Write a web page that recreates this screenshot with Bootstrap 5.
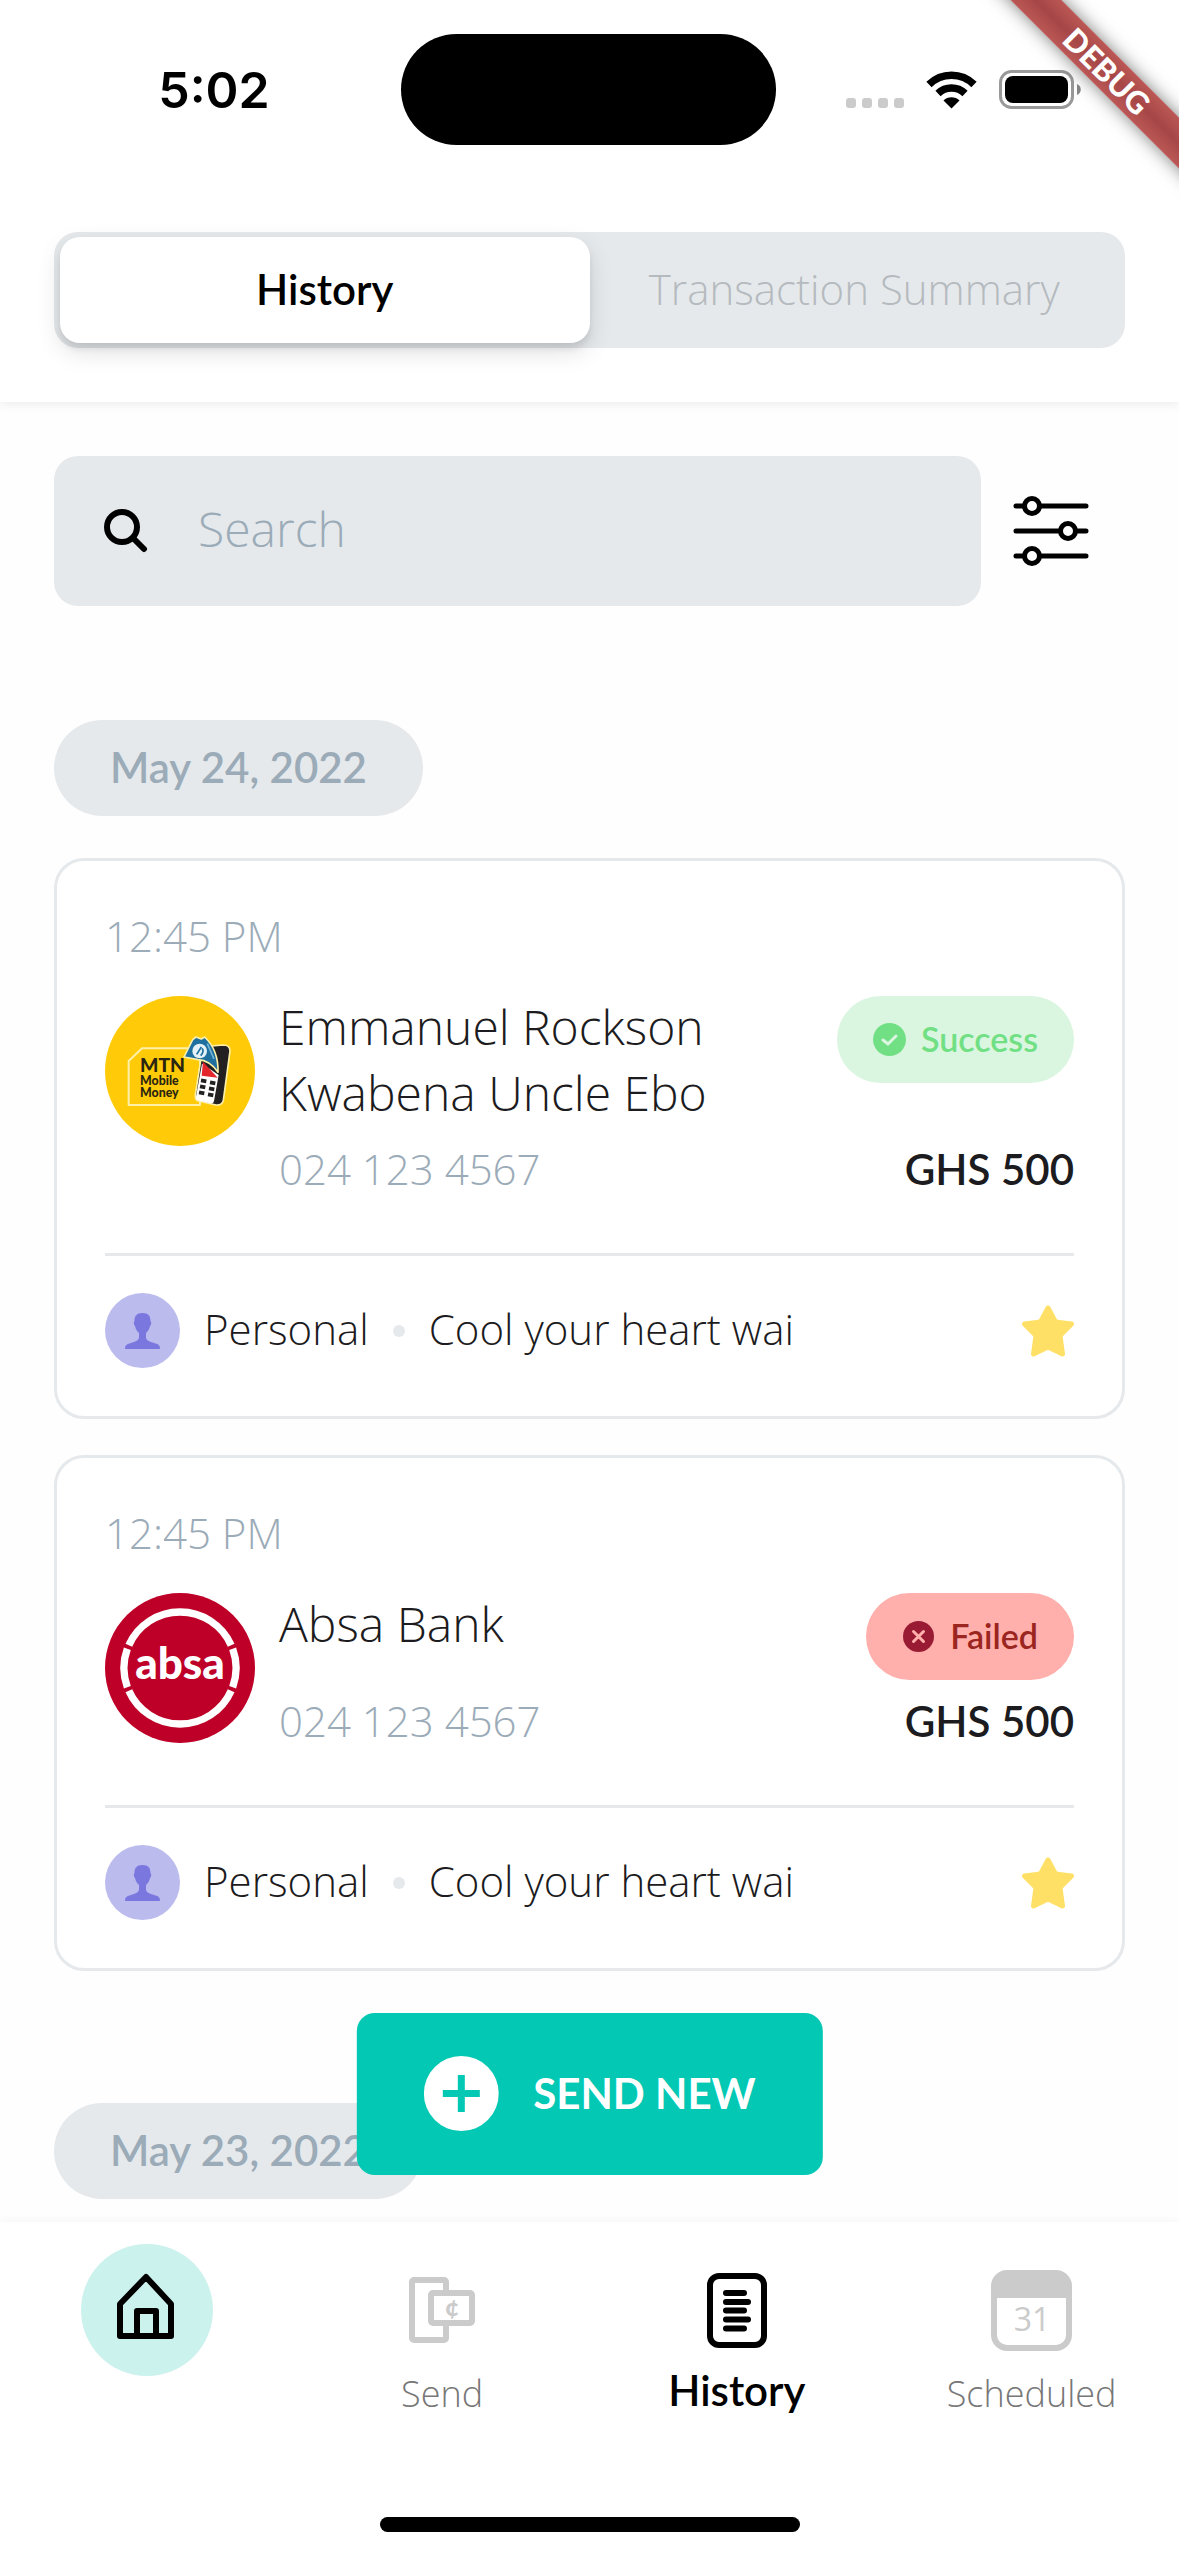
<!DOCTYPE html>
<html lang="en">
<head>
<meta charset="utf-8">
<meta name="viewport" content="width=device-width, initial-scale=1">
<title>History</title>
<link rel="stylesheet" href="https://cdn.jsdelivr.net/npm/bootstrap@5.3.0/dist/css/bootstrap.min.css">
<style>
:root { --haze: #e5e9ec; --muted: #9babb8; --ink: #1c1b20; --teal: #02c8b4; --side: 54px; --thin: 340; }
body { font-family: "Open Sans", "Noto Sans", sans-serif; font-weight: var(--thin); font-size: 42px; line-height: 60px; color: var(--ink); background: #fefefe; }
svg { display: block; flex: none; }
.strong-text { font-family: Lato, sans-serif; font-weight: 600; }
.muted-text { color: var(--muted); }

/* header */
.top-area { background: #fff; box-shadow: 0 2px 10px rgba(0,0,0,.08); padding-bottom: 54px; }
.status-row { padding-top: 34px; margin-bottom: 87px; }
.status-side { flex: 1 1 0; gap: 22px; }
.status-start { padding-left: 27px; }
.status-end { padding-right: 29px; }
.clock { font-family: Inter, sans-serif; font-weight: 600; font-size: 50px; color: #000; }
.island { width: 375px; height: 111px; background: #000; }
.ribbon-clip { position: absolute; top: 0; right: 0; width: 240px; height: 240px; overflow: hidden; pointer-events: none; }
.ribbon { position: absolute; top: 53px; right: -78px; width: 300px; height: 36px; line-height: 36px; transform: rotate(45deg); text-align: center; color: #fff; font-family: Lato, sans-serif; font-weight: 900; font-size: 31px; background: linear-gradient(#bb5856, #a64646 50%, #bb5856); box-shadow: 0 0 18px rgba(0,0,0,.5); }
.segment { margin: 0 var(--side); padding: 5px 6px; border-radius: 24px; background: var(--haze); }
.segment .btn { flex: 1 1 0; border: 0; border-radius: 20px; padding: 22px 0 24px; font-size: 42px; line-height: 60px; font-weight: 300; color: #b5babe; }
.segment .btn.active { background: #fff; color: #000; font-weight: 600; box-shadow: 0 9px 24px rgba(0,0,0,.12), 0 6px 6px rgba(0,0,0,.08); }

/* list */
.feed { padding: 54px var(--side) 22px; }
.search-box { height: 150px; border-radius: 24px; background: var(--haze); padding-left: 50px; gap: 50px; }
.search-box input, .search-box input:focus { background: none; border: 0; box-shadow: none; padding: 0 0 4px; font-size: 48px; font-weight: 300; color: var(--ink); }
.search-box input::placeholder { color: var(--muted); opacity: 1; }
.filter-btn { margin: 0 36px 0 32px; }
.day-pill { align-self: flex-start; padding: 17px 56px 19px; font-size: 42px; line-height: 60px; background: var(--haze); color: var(--muted); }
.first-day { margin: 114px 0 42px; }
.next-day { margin-top: 132px; }
.entries { gap: 36px; }
.entry { border: 3px solid var(--haze); border-radius: 30px; background: #fff; padding: 45px 48px 48px; }
.entry-main { margin-top: 26px; gap: 24px; }
.logo { width: 150px; height: 150px; margin-top: 4px; }
.who { font-size: 48px; line-height: 66px; padding: 2px 0; max-width: 460px; }
.entry-sub { margin-top: 11px; }
.status-tag { margin-top: 4px; height: 87px; padding: 0 36px 1px; gap: 15px; font-size: 34px; }
.tag-ok { background: #dbf6e0; color: #71e084; }
.tag-bad { background: #ffb0ac; color: #9b251f; }
.rule { border: 0; height: 3px; opacity: 1; background: var(--haze); margin: 54px 0 37px; }
.tail { gap: 24px; }
.tail span { padding-bottom: 3px; }
.bullet { width: 12px; height: 12px; background: var(--haze); }

/* bottom bar */
.bottom-bar { background: #fff; padding: 22px 0 24px; box-shadow: 0 -2px 9px rgba(0,0,0,.03); }
.send-new { position: absolute; bottom: 100%; left: 50%; transform: translateX(-50%); margin-bottom: 47px; height: 162px; padding: 0 67px 2px; gap: 35px; border-radius: 18px; font-family: Lato, sans-serif; font-weight: 700; font-size: 42px; }
.send-new, .send-new:hover { background: var(--teal); color: #fff; }
.bottom-bar a { flex: 1 1 0; color: #777; font-size: 36px; line-height: 36px; text-decoration: none; }
.bottom-bar a.active { color: #000; font-size: 42px; line-height: 28px; }
.icon-slot { height: 132px; }
.home-bar { width: 420px; height: 15px; background: #000; margin: 105px auto 0; }
</style>
<script src="https://cdn.jsdelivr.net/npm/bootstrap@5.3.0/dist/js/bootstrap.bundle.min.js"></script>
</head>
<body class="d-flex flex-column min-vh-100">

<svg class="d-none" aria-hidden="true">
  <symbol id="person" viewBox="0 0 75 75">
    <circle cx="37.500" cy="37.500" r="37.500" fill="#bbbbee"/>
    <path fill="#7a77df" d="M37.500 20c6 0 8 3 8 8 1 1 1 4-.5 5-.5 3-2 5-4 7v5c1 3 5 4 8 5 4 1 6 2 6 6H20c0-4 2-5 6-6 3-1 7-2 8-5v-5c-2-2-3.500-4-4-7-1.500-1-1.500-4-.5-5 0-5 2-8 8-8z"/>
  </symbol>
  <symbol id="star" viewBox="0 0 52 52">
    <path fill="#ffe066" stroke="#ffe066" stroke-width="5" stroke-linejoin="round" d="M26 3l7.500 14L49.500 19 38 30.500 40.500 49 26 42 11.500 49 14 30.500 2.500 19 18.500 17z"/>
  </symbol>
</svg>

<header class="top-area position-relative">
  <div class="status-row d-flex align-items-center">
    <div class="status-side status-start d-flex justify-content-center clock">5:02</div>
    <div class="island rounded-pill"></div>
    <div class="status-side status-end d-flex justify-content-center align-items-center">
      <svg width="58" height="38" viewBox="0 0 58 38" fill="#cbcbcb"><rect y="27" width="10" height="10" rx="3"/><rect x="16" y="27" width="10" height="10" rx="3"/><rect x="32" y="27" width="10" height="10" rx="3"/><rect x="48" y="27" width="10" height="10" rx="3"/></svg>
      <svg width="51" height="38" viewBox="0 0 51 38"><path d="M3 13.500a32 32 0 0 1 45 0" fill="none" stroke="#000" stroke-width="7.500"/><path d="M12 22.500a19.500 19.500 0 0 1 27 0" fill="none" stroke="#000" stroke-width="7.500"/><path d="M17.500 29.500a11.500 11.500 0 0 1 16 0L25.500 37.500z"/></svg>
      <svg width="82" height="39" viewBox="0 0 82 39"><rect x="1.500" y="1.500" width="72" height="36" rx="11" fill="none" stroke="#999" stroke-width="3"/><rect x="6" y="6" width="63" height="27" rx="8"/><path d="M78 14c5 2 5 9 0 11z" fill="#888"/></svg>
    </div>
  </div>
  <div class="segment d-flex" role="tablist">
    <button type="button" class="btn active strong-text" role="tab" aria-selected="true">History</button>
    <button type="button" class="btn" role="tab" aria-selected="false">Transaction Summary</button>
  </div>
  <div class="ribbon-clip"><div class="ribbon">DEBUG</div></div>
</header>

<main class="feed d-flex flex-column flex-grow-1">
  <div class="d-flex align-items-center">
    <div class="search-box d-flex align-items-center flex-grow-1">
      <label for="search" aria-label="Search"><svg width="44" height="44" viewBox="0 0 44 44" fill="none" stroke="#000" stroke-width="6" stroke-linecap="round"><circle cx="18" cy="18" r="15"/><path d="M30 30l10 10"/></svg></label>
      <input id="search" type="search" class="form-control" placeholder="Search">
    </div>
    <button type="button" class="btn p-0 border-0 filter-btn" aria-label="Filter">
      <svg width="76" height="72" viewBox="0 0 76 72" fill="none" stroke="#000" stroke-width="5" stroke-linecap="round"><path d="M3 11h8M27 11h46M3 36h44M63 36h10M3 61h8M27 61h46"/><circle cx="19" cy="11" r="7.500"/><circle cx="55" cy="36" r="7.500"/><circle cx="19" cy="61" r="7.500"/></svg>
    </button>
  </div>

  <div class="day-pill first-day rounded-pill strong-text">May 24, 2022</div>

  <div class="entries d-flex flex-column">
    <article class="entry">
      <div class="muted-text">12:45 PM</div>
      <div class="entry-main d-flex">
        <svg class="logo" viewBox="15 17 450 450">
          <circle cx="240" cy="242" r="225" fill="#ffcb08"/>
          <path d="M126 174H300V344H86V212z" fill="none" stroke="#fff0a8" stroke-width="6" stroke-linejoin="round"/>
          <g font-family="Lato, sans-serif" font-weight="900" fill="#2a2510"><text x="120" y="246" font-size="58">MTN</text><text x="120" y="283" font-size="37">Mobile</text><text x="120" y="320" font-size="37">Money</text></g>
          <path d="M318 168l52-4q20 0 20 18l-20 148q-4 16-22 14l-52-12q-12-4-10-18l20-130z" fill="#222021" stroke="#fff0a8" stroke-width="5"/>
          <path d="M306 220l50 34-14 78q-2 10-12 7l-34-8q-9-3-8-12z" fill="#fff"/>
          <path d="M309 214l44 48-48-6z" fill="#e3262c"/>
          <path d="M303 270l16 3M300 288l16 3M297 306l16 3M330 276l16 3M327 294l16 3M324 312l16 3" stroke="#222021" stroke-width="11"/>
          <path d="M252 200l26-52 10-8 16 6 10-6q42 40 40 106-24-36-60-38z" fill="#1f6f9f" stroke="#fff0a8" stroke-width="5" stroke-linejoin="round"/>
          <circle cx="299" cy="182" r="22" fill="#e4f1f7"/><path d="M290 192l14-22M302 196q12-14 4-22" stroke="#1f6f9f" stroke-width="5" fill="none"/>
          <path d="M322 160l20 46" stroke="#75b7d6" stroke-width="5"/>
        </svg>
        <div class="flex-grow-1">
          <div class="d-flex justify-content-between align-items-start">
            <div class="who">Emmanuel Rockson Kwabena Uncle Ebo</div>
            <div class="status-tag tag-ok rounded-pill strong-text d-flex align-items-center">
              <svg width="33" height="33" viewBox="0 0 33 33"><circle cx="16.500" cy="16.500" r="16.500" fill="#71e084"/><path d="M10 17l5 4 8-8" fill="none" stroke="#dbf6e0" stroke-width="3" stroke-linecap="round" stroke-linejoin="round"/></svg>Success
            </div>
          </div>
          <div class="entry-sub d-flex justify-content-between"><span class="muted-text">024 123 4567</span><span class="strong-text">GHS 500</span></div>
        </div>
      </div>
      <hr class="rule">
      <div class="tail d-flex align-items-center">
        <svg width="75" height="75"><use href="#person"/></svg>
        <span>Personal</span><i class="bullet rounded-circle"></i><span>Cool your heart wai</span>
        <svg class="ms-auto" width="52" height="52"><use href="#star"/></svg>
      </div>
    </article>

    <article class="entry">
      <div class="muted-text">12:45 PM</div>
      <div class="entry-main d-flex">
        <svg class="logo" viewBox="15 15 450 450">
          <circle cx="240" cy="240" r="225" fill="#be0028"/>
          <path d="M86.500 171.700A168 168 0 0 1 393.500 171.700M86.500 308.300A168 168 0 0 0 393.500 308.300M82 182.500A168 168 0 0 0 82 297.500M398 182.500A168 168 0 0 1 398 297.500" fill="none" stroke="#fff" stroke-width="22"/>
          <text x="240" y="274" text-anchor="middle" font-family="Lato, sans-serif" font-weight="900" font-size="132" fill="#fff">absa</text>
        </svg>
        <div class="flex-grow-1">
          <div class="d-flex justify-content-between align-items-start">
            <div class="who">Absa Bank</div>
            <div class="status-tag tag-bad rounded-pill strong-text d-flex align-items-center">
              <svg width="33" height="33" viewBox="0 0 33 33"><circle cx="16.500" cy="16.500" r="15.500" fill="#991b33"/><path d="M11.500 11.500l10 10M21.500 11.500l-10 10" stroke="#ffb0ac" stroke-width="3" stroke-linecap="round"/></svg>Failed
            </div>
          </div>
          <div class="entry-sub d-flex justify-content-between"><span class="muted-text">024 123 4567</span><span class="strong-text">GHS 500</span></div>
        </div>
      </div>
      <hr class="rule">
      <div class="tail d-flex align-items-center">
        <svg width="75" height="75"><use href="#person"/></svg>
        <span>Personal</span><i class="bullet rounded-circle"></i><span>Cool your heart wai</span>
        <svg class="ms-auto" width="52" height="52"><use href="#star"/></svg>
      </div>
    </article>
  </div>

  <div class="day-pill next-day rounded-pill strong-text">May 23, 2022</div>
</main>

<footer class="bottom-bar sticky-bottom">
  <button type="button" class="btn border-0 send-new d-flex align-items-center text-nowrap">
    <svg width="75" height="75" viewBox="0 0 75 75"><circle cx="37.500" cy="37.500" r="37.500" fill="#fff"/><path d="M37.500 19v37M19 37.500h37" stroke="#02c8b4" stroke-width="7"/></svg>SEND NEW
  </button>
  <nav class="d-flex">
    <a href="#" class="d-flex flex-column align-items-center" aria-label="Home">
      <svg width="132" height="132" viewBox="0 0 132 132"><circle cx="66" cy="66" r="66" fill="#ccf2ee"/><path d="M65 33l25 27v32H39V60zM56 92V67h19v25" fill="none" stroke="#000" stroke-width="6" stroke-linejoin="round"/></svg>
    </a>
    <a href="#" class="d-flex flex-column align-items-center">
      <span class="icon-slot d-flex align-items-center"><svg width="66" height="66" viewBox="0 0 66 66" fill="#fff" stroke="#cbcbcb" stroke-width="6"><rect x="3" y="3" width="34" height="60" rx="2"/><rect x="22" y="16" width="41" height="30" rx="2"/><text x="43" y="39" text-anchor="middle" font-family="Lato, sans-serif" font-weight="900" font-size="25" fill="#cbcbcb" stroke="none">¢</text></svg></span>Send
    </a>
    <a href="#" class="d-flex flex-column align-items-center active strong-text" aria-current="page">
      <span class="icon-slot d-flex align-items-center"><svg width="60" height="75" viewBox="0 0 60 75" fill="none" stroke="#000" stroke-width="6" stroke-linecap="round"><rect x="3" y="3" width="54" height="69" rx="9"/><path d="M19 20h18M19 29h22M19 37.500h18M19 46.500h22M19 55.500h18"/></svg></span>History
    </a>
    <a href="#" class="d-flex flex-column align-items-center">
      <span class="icon-slot d-flex align-items-center"><svg width="81" height="81" viewBox="0 0 81 81"><rect x="3" y="3" width="75" height="75" rx="13" fill="none" stroke="#cbcbcb" stroke-width="6"/><path d="M3 28V16Q3 3 16 3h49q13 0 13 13v12z" fill="#cbcbcb"/><text x="41" y="61" text-anchor="middle" font-size="32" font-weight="400" fill="#cbcbcb">31</text></svg></span>Scheduled
    </a>
  </nav>
  <div class="home-bar rounded-pill"></div>
</footer>
</body>
</html>
